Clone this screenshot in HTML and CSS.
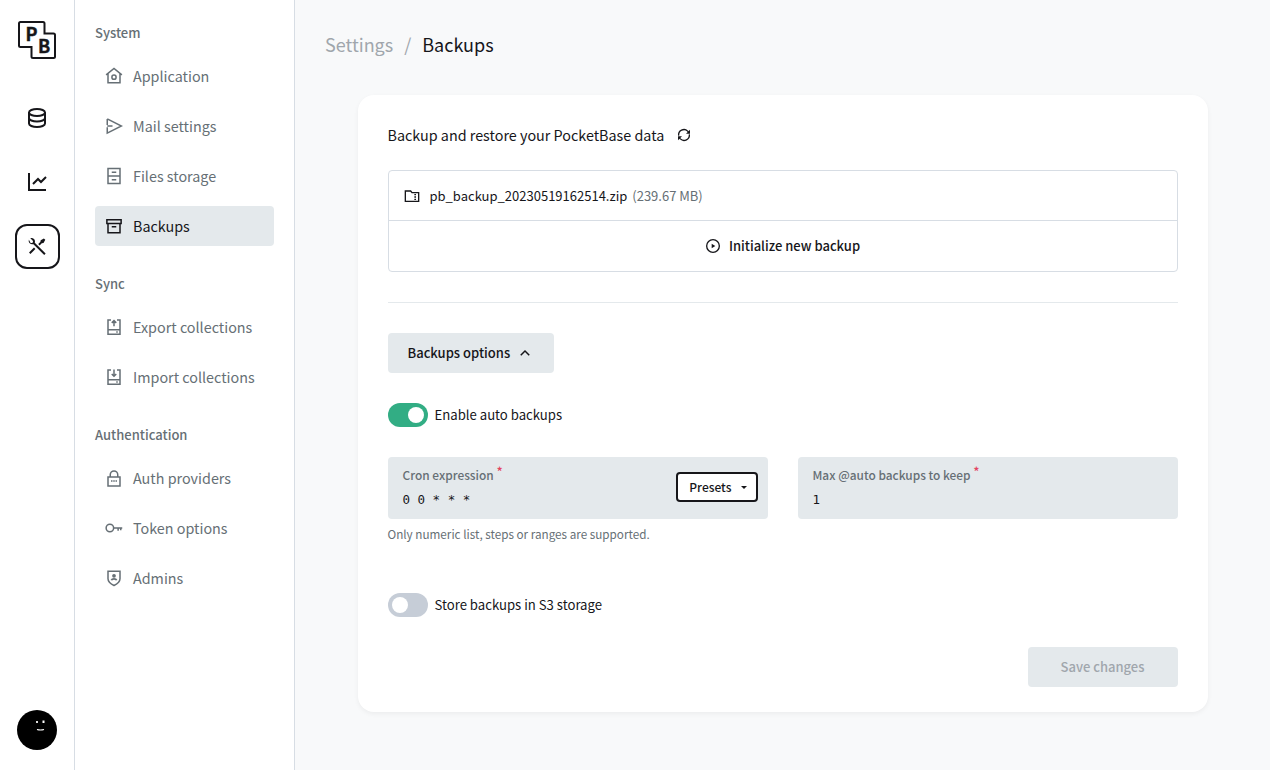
FILE: index.html
```html
<!DOCTYPE html>
<html lang="en">
<head>
  <meta charset="UTF-8">
  <title>Backups - PocketBase</title>
  <link rel="stylesheet" href="styles.css">
</head>
<body>

<div class="app">

  <!-- Icon bar -->
  <aside class="iconbar">
    <svg class="logo" viewBox="0 0 40 40" width="40" height="40">
      <path d="M3.500 2H26a1.500 1.500 0 0 1 1.500 1.500V13.500H36.500a1.500 1.500 0 0 1 1.500 1.500V36.500a1.500 1.500 0 0 1-1.500 1.500H16a1.500 1.500 0 0 1-1.500-1.500V27H3.500A1.500 1.500 0 0 1 2 25.500V3.500A1.500 1.500 0 0 1 3.500 2Z" fill="none" stroke="#16161a" stroke-width="2"/>
      <text x="8.500" y="21" class="logo-letter">P</text>
      <text x="21" y="33" class="logo-letter">B</text>
    </svg>
    <nav class="iconbar-nav">
      <a class="iconbar-link">
        <svg viewBox="0 0 24 24" width="24" height="24" fill="none" stroke="#16161a" stroke-width="2"><path d="M4 6.500C4 4.500 7.600 3 12 3s8 1.500 8 3.500v11c0 2-3.600 3.500-8 3.500s-8-1.500-8-3.500Z"/><path d="M4 6.500C4 8.500 7.600 10 12 10s8-1.500 8-3.500M4 12c0 2 3.600 3.500 8 3.500s8-1.500 8-3.500"/></svg>
      </a>
      <a class="iconbar-link">
        <svg viewBox="0 0 24 24" width="24" height="24" fill="#16161a"><path d="M5 3V19H21V21H3V3H5ZM20.293 6.293L21.707 7.707L16 13.414L13 10.415L8.707 14.707L7.293 13.293L13 7.586L16 10.585L20.293 6.293Z"/></svg>
      </a>
      <a class="iconbar-link active">
        <svg viewBox="0 0 24 24" width="24" height="24" fill="#16161a"><path d="M5.330 3.272C6.563 2.833 7.991 3.104 8.979 4.093C9.968 5.081 10.239 6.510 9.800 7.743L20.638 18.580L19.224 19.995L8.386 9.157C7.153 9.596 5.724 9.325 4.736 8.336C3.747 7.348 3.476 5.919 3.915 4.686L5.444 7.629C6.029 8.215 6.979 8.215 7.565 7.629C8.151 7.043 8.151 6.093 7.565 5.508L5.330 3.272ZM15.696 5.152L18.878 3.384L20.292 4.799L18.525 7.981L16.757 8.334L14.636 10.456L13.221 9.041L15.343 6.920L15.696 5.152ZM8.979 12.517L10.394 13.932L5.444 18.881L4.030 17.467L8.979 12.517Z"/></svg>
      </a>
    </nav>
    <div class="avatar">
      <svg viewBox="0 0 40 40" width="40" height="40"><circle cx="20" cy="20" r="20" fill="#000"/><rect x="19" y="11" width="2" height="2" fill="#ddd"/><rect x="25.500" y="10.500" width="2" height="2.500" fill="#fff"/><path d="M20 19.500q3.500 1 7 0" fill="none" stroke="#fff" stroke-width="1.200"/></svg>
    </div>
  </aside>

  <!-- Settings menu -->
  <aside class="sidemenu">
    <div class="menu-title">System</div>
    <a class="menu-item">
      <svg class="menu-icon" viewBox="0 0 24 24"><path d="M1.500 10.500L12 2l10.500 8.500M4 8.500V21h16V8.500"/><circle cx="12" cy="13.500" r="2.800"/></svg>
      <span>Application</span>
    </a>
    <a class="menu-item">
      <svg class="menu-icon" viewBox="0 0 24 24"><path d="M3 2.500L22 12 3 21.500V13.500M3 10.500V2.500M3 12h7"/></svg>
      <span>Mail settings</span>
    </a>
    <a class="menu-item">
      <svg class="menu-icon" viewBox="0 0 24 24"><path d="M4 2h16v20H4ZM4 12h16M9 7h6M9 17h6"/></svg>
      <span>Files storage</span>
    </a>
    <a class="menu-item active">
      <svg class="menu-icon" viewBox="0 0 24 24"><path d="M2.500 3.500h19v5h-19ZM4 8.500V21h16V8.500M9 13h6"/></svg>
      <span>Backups</span>
    </a>

    <div class="menu-title">Sync</div>
    <a class="menu-item">
      <svg class="menu-icon" viewBox="0 0 24 24"><path d="M8 2.500H4v19h16v-19h-4M4 15.500h16M12 11V3.500M9 6.500l3-3 3 3"/><path d="M15 18.500h2"/></svg>
      <span>Export collections</span>
    </a>
    <a class="menu-item">
      <svg class="menu-icon" viewBox="0 0 24 24"><path d="M8 2.500H4v19h16v-19h-4M4 15.500h16M12 2v9M9 8l3 3 3-3"/><path d="M15 18.500h2"/></svg>
      <span>Import collections</span>
    </a>

    <div class="menu-title">Authentication</div>
    <a class="menu-item">
      <svg class="menu-icon" viewBox="0 0 24 24"><path d="M4 10.500h16v12H4ZM7 10.500V7.500a5 5 0 0 1 10 0v3M8 16h2M11 16h2M14 16h2"/></svg>
      <span>Auth providers</span>
    </a>
    <a class="menu-item">
      <svg class="menu-icon" viewBox="0 0 24 24"><circle cx="6.500" cy="12" r="5"/><path d="M11.500 12H23M17.500 12v3.500M21 12v3"/></svg>
      <span>Token options</span>
    </a>
    <a class="menu-item">
      <svg class="menu-icon" viewBox="0 0 24 24"><path d="M4 3h16v10c0 4-4 7-8 9-4-2-8-5-8-9Z"/><circle cx="12" cy="9" r="1.500" fill="#666f75"/><path d="M8.500 15c1-2.500 6-2.500 7 0" stroke-width="2.500"/></svg>
      <span>Admins</span>
    </a>
  </aside>

  <!-- Page content -->
  <main class="page">
    <div class="breadcrumbs">
      <span class="crumb-muted">Settings</span>
      <span class="crumb-sep">/</span>
      <span>Backups</span>
    </div>

    <section class="card">
      <div class="card-title">
        <span>Backup and restore your PocketBase data</span>
        <svg class="refresh" viewBox="0 0 24 24" width="16" height="16" fill="none" stroke="#16161a" stroke-width="2"><path d="M4 13A8 8 0 0 1 17.500 6.200L19 8M20 11A8 8 0 0 1 6.500 17.800L5 16"/><path d="M21 4v6h-6M3 20v-6h6" fill="#16161a" stroke="none"/></svg>
      </div>

      <div class="backup-list">
        <div class="backup-row">
          <svg viewBox="0 0 24 24" width="16" height="16" fill="none" stroke="#16161a" stroke-width="2"><path d="M2 4.500h8l2 2.500h10v13H2Z"/><path d="M15.500 10h2.500M15.500 13.500h2.500M15.500 17h2.500"/></svg>
          <span class="backup-name">pb_backup_20230519162514.zip</span>
          <span class="backup-size">(239.67 MB)</span>
        </div>
        <div class="backup-new">
          <svg viewBox="0 0 24 24" width="16" height="16" fill="none" stroke="#16161a" stroke-width="2"><circle cx="12" cy="12" r="9.500"/><path d="M10 8.500l5.500 3.500-5.500 3.500Z" fill="#16161a" stroke="none"/></svg>
          <span>Initialize new backup</span>
        </div>
      </div>

      <hr class="divider">

      <button class="btn-options">
        <span>Backups options</span>
        <svg viewBox="0 0 24 24" width="18" height="18" fill="#16161a"><path d="M12 10.828L7.050 15.778L5.636 14.364L12 8L18.364 14.364L16.950 15.778Z"/></svg>
      </button>

      <label class="toggle-row toggle-auto">
        <span class="toggle on"></span>
        <span>Enable auto backups</span>
      </label>

      <div class="fields">
        <div>
          <div class="field field-cron">
            <div>
              <div class="field-label">Cron expression <span class="req">*</span></div>
              <div class="field-value">0 0 * * *</div>
            </div>
            <button class="btn-presets">
              <span>Presets</span>
              <span class="caret"></span>
            </button>
          </div>
          <div class="help">Only numeric list, steps or ranges are supported.</div>
        </div>
        <div>
          <div class="field">
            <div class="field-label">Max @auto backups to keep <span class="req">*</span></div>
            <div class="field-value">1</div>
          </div>
        </div>
      </div>

      <label class="toggle-row toggle-s3">
        <span class="toggle"></span>
        <span>Store backups in S3 storage</span>
      </label>

      <div class="card-footer">
        <button class="btn-save" disabled>Save changes</button>
      </div>
    </section>
  </main>

</div>

</body>
</html>
```

FILE: styles.css
```css
* {
  box-sizing: border-box;
}
body {
  margin: 0;
  font-family: "Noto Sans CJK SC", "Noto Sans", sans-serif;
  font-size: 13px;
  line-height: 20px;
  color: #16161a;
  background: #f8f9fa;
}
.app {
  display: flex;
  height: 770px;
  overflow: hidden;
}

/* icon bar */
.iconbar {
  width: 75px;
  flex-shrink: 0;
  display: flex;
  flex-direction: column;
  align-items: center;
  padding: 20px 0;
  background: #fff;
  border-right: 1px solid #d7dde4;
}
.logo {
  display: block;
}
.logo-letter {
  font-size: 18px;
  font-weight: 700;
  fill: #16161a;
  stroke: #16161a;
  stroke-width: 0.4;
}
.iconbar-nav {
  display: flex;
  flex-direction: column;
  gap: 20px;
  margin-top: 36px;
  flex: 1;
}
.iconbar-link {
  width: 45px;
  height: 44px;
  display: flex;
  align-items: center;
  justify-content: center;
  border: 2px solid transparent;
  border-radius: 12px;
}
.iconbar-link.active {
  height: 45px;
  border-color: #16161a;
}
.avatar {
  width: 40px;
  height: 40px;
}

/* settings menu */
.sidemenu {
  width: 220px;
  flex-shrink: 0;
  padding: 23px 20px 0;
  background: #fff;
  border-right: 1px solid #d7dde4;
}
.menu-title {
  height: 20px;
  margin: 28px 0 13px;
  font-size: 13px;
  font-weight: 500;
  color: #666f75;
}
.menu-title:first-child {
  margin-top: 0;
}
.menu-item {
  display: flex;
  align-items: center;
  gap: 10px;
  height: 40px;
  margin-bottom: 10px;
  padding-left: 10px;
  border-radius: 4px;
  font-size: 14.35px;
  color: #666f75;
}
.menu-item:last-child {
  margin-bottom: 0;
}
.menu-icon {
  width: 18px;
  height: 18px;
  flex-shrink: 0;
  fill: none;
  stroke: #666f75;
  stroke-width: 2;
}
.menu-item.active {
  background: #e4e9ec;
  color: #16161a;
}
.menu-item.active .menu-icon {
  stroke: #16161a;
}

/* page */
.page {
  flex: 1;
  min-width: 0;
  padding: 29px 30px 0;
}
.breadcrumbs {
  display: flex;
  gap: 11px;
  height: 30px;
  font-size: 18px;
  line-height: 30px;
}
.crumb-muted {
  color: #a0a6ac;
}
.crumb-sep {
  color: #a0a6ac;
}
.card {
  width: 850px;
  margin: 36px auto 0;
  padding: 30px 30px 25px;
  background: #fff;
  border-radius: 16px;
  box-shadow: 0 2px 5px rgba(0,0,0,0.05);
}
.card-title {
  display: flex;
  align-items: center;
  gap: 12px;
  height: 20px;
  font-size: 14.35px;
}
.refresh {
  display: block;
}
.backup-list {
  margin-top: 25px;
  border: 1px solid #d7dde4;
  border-radius: 4px;
}
.backup-row {
  display: flex;
  align-items: center;
  height: 50px;
  padding: 0 15px;
  border-bottom: 1px solid #d7dde4;
}
.backup-name {
  margin-left: 10px;
}
.backup-size {
  margin-left: 5px;
  color: #666f75;
}
.backup-new {
  display: flex;
  align-items: center;
  justify-content: center;
  gap: 8px;
  height: 50px;
  font-weight: 500;
}
.divider {
  height: 1px;
  margin: 30px 0;
  border: 0;
  background: #e4e9ec;
}
.btn-options {
  display: flex;
  align-items: center;
  gap: 6px;
  height: 40px;
  padding: 0 20px;
  border: 0;
  border-radius: 4px;
  background: #e4e9ec;
  font: inherit;
  font-weight: 500;
  color: #16161a;
}
.toggle-row {
  display: flex;
  align-items: center;
  gap: 7px;
  height: 24px;
  font-size: 13.15px;
}
.toggle-auto {
  margin-top: 30px;
}
.toggle-s3 {
  margin-top: 49px;
}
.toggle {
  position: relative;
  width: 40px;
  height: 24px;
  border-radius: 12px;
  background: #c6cdd7;
}
.toggle::after {
  content: "";
  position: absolute;
  top: 4px;
  left: 4px;
  width: 16px;
  height: 16px;
  border-radius: 50%;
  background: #fff;
}
.toggle.on {
  background: #32ad84;
}
.toggle.on::after {
  left: 20px;
}
.fields {
  display: grid;
  grid-template-columns: 380px 380px;
  gap: 30px;
  margin-top: 30px;
}
.field {
  height: 62px;
  padding: 8px 15px 0;
  border-radius: 4px;
  background: #e4e9ec;
}
.field-cron {
  display: flex;
  justify-content: space-between;
  padding-right: 10px;
}
.field-label {
  height: 20px;
  font-size: 11.9px;
  font-weight: 500;
  color: #666f75;
}
.req {
  position: relative;
  top: -3px;
  font-size: 13px;
  color: #e34562;
}
.field-value {
  margin-top: 5px;
  font-family: "DejaVu Sans Mono", monospace;
  font-size: 12.5px;
  line-height: 20px;
}
.btn-presets {
  display: flex;
  align-items: center;
  gap: 9px;
  height: 30px;
  margin-top: 7px;
  padding: 0 9px 0 11px;
  border: 2px solid #16161a;
  border-radius: 4px;
  background: #fff;
  font: inherit;
  font-size: 12px;
  font-weight: 500;
  color: #16161a;
}
.caret {
  width: 0;
  height: 0;
  border-left: 3px solid transparent;
  border-right: 3px solid transparent;
  border-top: 3px solid #16161a;
}
.help {
  margin-top: 5px;
  font-size: 11.7px;
  color: #666f75;
}
.card-footer {
  display: flex;
  justify-content: flex-end;
  margin-top: 30px;
}
.btn-save {
  width: 150px;
  height: 40px;
  border: 0;
  border-radius: 4px;
  background: #e4e9ec;
  font: inherit;
  font-weight: 500;
  color: #a0a6ac;
}
```
